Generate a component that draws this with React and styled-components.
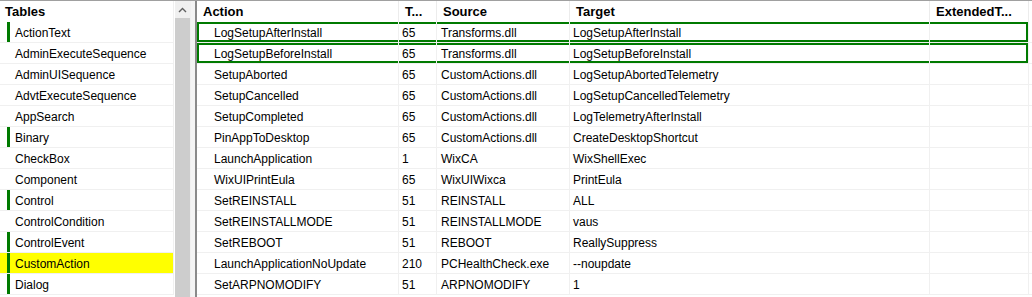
import React from 'react';
import styled, { createGlobalStyle } from 'styled-components';

const GlobalStyle = createGlobalStyle`
  html, body {
    margin: 0;
    padding: 0;
    background: #fff;
    overflow: hidden;
  }

  body {
    font-family: "Liberation Sans", Arial, sans-serif;
    font-size: 12px;
    color: #000;
  }
`;

const StyledWindow = styled.div`
  display: flex;
  width: 1032px;
  height: 297px;
  border-top: 1px solid #a0a0a0;
  box-sizing: border-box;
  overflow: hidden;
`;

const StyledLeftPane = styled.div`
  display: flex;
  flex-direction: column;
  width: 174px;
  flex-shrink: 0;
`;

const StyledPaneTitle = styled.div`
  height: 21px;
  line-height: 21px;
  padding-left: 5px;
  font-size: 13px;
  font-weight: bold;
  border-right: 1px solid #f0f0f0;
`;

const StyledTableRow = styled.div`
  display: flex;
  align-items: center;
  height: 21px;
  box-sizing: border-box;
  border-bottom: 1px solid #f0f0f0;
  border-right: 1px solid #f0f0f0;
  background-color: ${({ $selected }) => ($selected ? '#ffff00' : '#fff')};
  white-space: nowrap;
`;

const StyledTableName = styled.span`
  padding-top: 2px;
`;

const StyledMarker = styled.span`
  width: 3px;
  height: 20px;
  margin: 0 5px 0 7px;
  background-color: ${({ $on }) => ($on ? '#007a00' : 'transparent')};
`;

const StyledScrollbar = styled.div`
  display: flex;
  flex-direction: column;
  width: 17px;
  flex-shrink: 0;
  border-left: 1px solid #fff;
  box-sizing: border-box;
  background-color: #f0f0f0;
`;

const StyledArrow = styled.div`
  display: flex;
  align-items: center;
  justify-content: center;
  height: 17px;
  padding-right: 1px;
`;

const StyledThumb = styled.div`
  flex: 1;
  margin-right: 1px;
  background-color: #cdcdcd;
`;

const StyledSplitter = styled.div`
  width: 4px;
  flex-shrink: 0;
  background-color: #f4f4f4;
`;

const StyledGrid = styled.div`
  display: flex;
  flex-direction: column;
  flex: 1;
  border-left: 2px solid #8a8a8a;
`;

const StyledHeaderRow = styled.div`
  display: flex;
  height: 21px;
`;

const StyledHeaderCell = styled.div`
  width: ${({ $width }) => $width}px;
  flex-shrink: 0;
  box-sizing: border-box;
  padding-left: 6px;
  border-right: 1px solid #ececec;
  line-height: 21px;
  font-size: 13px;
  font-weight: bold;
  white-space: nowrap;
  overflow: hidden;
`;

const StyledDataRow = styled.div`
  display: flex;
  height: 21px;
  box-sizing: border-box;
  border-bottom: 1px solid #f0f0f0;
`;

const greenEdges = (first, last) => {
  const shadows = ['inset 0 2px 0 #007a00', 'inset 0 -2px 0 #007a00'];
  if (first) shadows.push('inset 2px 0 0 #007a00');
  if (last) shadows.push('inset -2px 0 0 #007a00');
  return shadows.join(', ');
};

const StyledDataCell = styled.div`
  width: ${({ $width }) => $width}px;
  flex-shrink: 0;
  box-sizing: border-box;
  height: 20px;
  line-height: 20px;
  padding-top: 1px;
  padding-left: ${({ $indent }) => $indent}px;
  border-right: 1px solid #f0f0f0;
  white-space: nowrap;
  overflow: hidden;
  box-shadow: ${({ $marked, $first, $last }) => ($marked ? greenEdges($first, $last) : 'none')};
`;

const tables = [
  { name: 'ActionText', marked: true },
  { name: 'AdminExecuteSequence' },
  { name: 'AdminUISequence' },
  { name: 'AdvtExecuteSequence' },
  { name: 'AppSearch' },
  { name: 'Binary', marked: true },
  { name: 'CheckBox' },
  { name: 'Component' },
  { name: 'Control', marked: true },
  { name: 'ControlCondition' },
  { name: 'ControlEvent', marked: true },
  { name: 'CustomAction', marked: true, selected: true },
  { name: 'Dialog', marked: true }
];

const columns = [
  { title: 'Action', width: 202, indent: 17 },
  { title: 'T...', width: 38, indent: 3 },
  { title: 'Source', width: 133, indent: 4 },
  { title: 'Target', width: 360, indent: 3 },
  { title: 'ExtendedT...', width: 99, indent: 3 }
];

const actions = [
  ['LogSetupAfterInstall', '65', 'Transforms.dll', 'LogSetupAfterInstall', '', true],
  ['LogSetupBeforeInstall', '65', 'Transforms.dll', 'LogSetupBeforeInstall', '', true],
  ['SetupAborted', '65', 'CustomActions.dll', 'LogSetupAbortedTelemetry', ''],
  ['SetupCancelled', '65', 'CustomActions.dll', 'LogSetupCancelledTelemetry', ''],
  ['SetupCompleted', '65', 'CustomActions.dll', 'LogTelemetryAfterInstall', ''],
  ['PinAppToDesktop', '65', 'CustomActions.dll', 'CreateDesktopShortcut', ''],
  ['LaunchApplication', '1', 'WixCA', 'WixShellExec', ''],
  ['WixUIPrintEula', '65', 'WixUIWixca', 'PrintEula', ''],
  ['SetREINSTALL', '51', 'REINSTALL', 'ALL', ''],
  ['SetREINSTALLMODE', '51', 'REINSTALLMODE', 'vaus', ''],
  ['SetREBOOT', '51', 'REBOOT', 'ReallySuppress', ''],
  ['LaunchApplicationNoUpdate', '210', 'PCHealthCheck.exe', '--noupdate', ''],
  ['SetARPNOMODIFY', '51', 'ARPNOMODIFY', '1', '']
];

const App = () => {
  return (
    <>
      <GlobalStyle />
      <StyledWindow>
        <StyledLeftPane>
          <StyledPaneTitle>Tables</StyledPaneTitle>
          {tables.map((t) => (
            <StyledTableRow key={t.name} $selected={t.selected}>
              <StyledMarker $on={t.marked} />
              <StyledTableName>{t.name}</StyledTableName>
            </StyledTableRow>
          ))}
        </StyledLeftPane>

        <StyledScrollbar>
          <StyledArrow>
            <svg width="9" height="6" viewBox="0 0 9 6">
              <polyline points="1,5 4.5,1.5 8,5" fill="none" stroke="#606060" strokeWidth="1.4" />
            </svg>
          </StyledArrow>
          <StyledThumb />
        </StyledScrollbar>

        <StyledSplitter />

        <StyledGrid>
          <StyledHeaderRow>
            {columns.map((c) => (
              <StyledHeaderCell key={c.title} $width={c.width}>{c.title}</StyledHeaderCell>
            ))}
          </StyledHeaderRow>
          {actions.map((row) => {
            const marked = row[5];
            return (
              <StyledDataRow key={row[0]}>
                {columns.map((c, i) => (
                  <StyledDataCell
                    key={c.title}
                    $width={c.width}
                    $indent={c.indent}
                    $marked={marked}
                    $first={i === 0}
                    $last={i === columns.length - 1}
                  >
                    {row[i]}
                  </StyledDataCell>
                ))}
              </StyledDataRow>
            );
          })}
        </StyledGrid>
      </StyledWindow>
    </>
  );
}

export default App;
